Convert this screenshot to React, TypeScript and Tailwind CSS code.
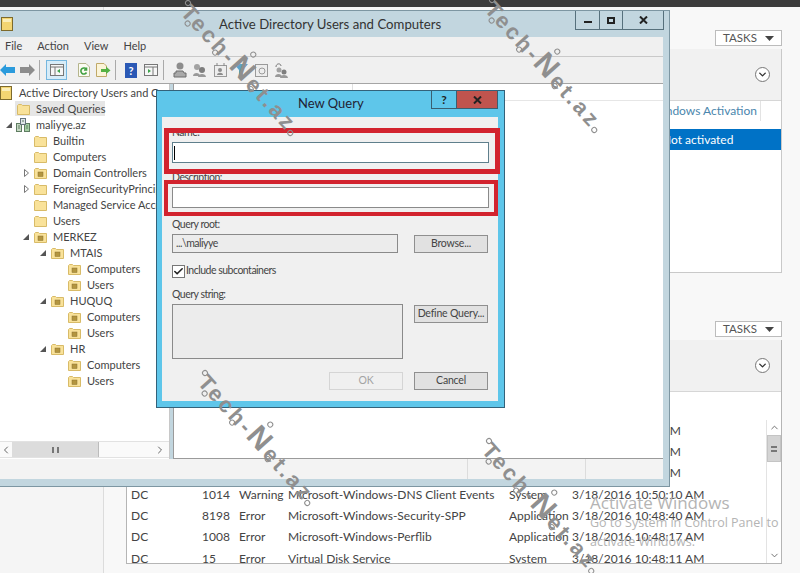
import React from "react";
import { Check, ChevronDown, ChevronLeft, ChevronRight, ChevronUp } from "lucide-react";

const tree = [
  { level: 0, label: "Active Directory Users and Computers", icon: "root" },
  { level: 1, label: "Saved Queries", icon: "folder", selected: true },
  { level: 1, label: "maliyye.az", icon: "domain", arrow: "open" },
  { level: 2, label: "Builtin", icon: "folder" },
  { level: 2, label: "Computers", icon: "folder" },
  { level: 2, label: "Domain Controllers", icon: "ou", arrow: "closed" },
  { level: 2, label: "ForeignSecurityPrincipals", icon: "folder", arrow: "closed" },
  { level: 2, label: "Managed Service Accounts", icon: "folder" },
  { level: 2, label: "Users", icon: "folder" },
  { level: 2, label: "MERKEZ", icon: "ou", arrow: "open" },
  { level: 3, label: "MTAIS", icon: "ou", arrow: "open" },
  { level: 4, label: "Computers", icon: "ou" },
  { level: 4, label: "Users", icon: "ou" },
  { level: 3, label: "HUQUQ", icon: "ou", arrow: "open" },
  { level: 4, label: "Computers", icon: "ou" },
  { level: 4, label: "Users", icon: "ou" },
  { level: 3, label: "HR", icon: "ou", arrow: "open" },
  { level: 4, label: "Computers", icon: "ou" },
  { level: 4, label: "Users", icon: "ou" },
];

const events = [
  ["", "", "", "", "", "AM"],
  ["", "", "", "", "", "AM"],
  ["", "", "", "", "", "AM"],
  ["DC", "1014", "Warning", "Microsoft-Windows-DNS Client Events", "System", "3/18/2016 10:50:10 AM"],
  ["DC", "8198", "Error", "Microsoft-Windows-Security-SPP", "Application", "3/18/2016 10:48:40 AM"],
  ["DC", "1008", "Error", "Microsoft-Windows-Perflib", "Application", "3/18/2016 10:48:17 AM"],
  ["DC", "15", "Error", "Virtual Disk Service", "System", "3/18/2016 10:48:11 AM"],
];

const TreeIcon = ({ kind }: { kind: string }) => {
  if (kind === "root")
    return (
      <svg width="12" height="14" viewBox="0 0 12 14">
        <rect x="0.5" y="0.5" width="11" height="13" fill="#f3d572" stroke="#7d6a2c" />
        <rect x="2" y="2" width="8" height="3" fill="#fbeeb8" />
      </svg>
    );
  if (kind === "domain")
    return (
      <svg width="14" height="14" viewBox="0 0 14 14">
        <rect x="0.5" y="5.5" width="5" height="8" fill="#c7d8c4" stroke="#5f7d62" />
        <rect x="8.5" y="5.5" width="5" height="8" fill="#a5cfa4" stroke="#5f7d62" />
        <rect x="4.5" y="0.5" width="5" height="6" fill="#dfe5e8" stroke="#66747c" />
        <path d="M2 8h2M2 10h2M10 8h2M10 10h2M6 3h2" stroke="#5f7d62" />
      </svg>
    );
  return (
    <svg width="13" height="13" viewBox="0 0 13 13">
      <path d="M0.5 2.5L1.5 1.5H4.5L5.5 2.5H12.5V11.5H0.5Z" fill="#f9e29a" stroke="#d8bb68" />
      {kind === "ou" && <rect x="4" y="5" width="5" height="4.5" fill="#b3953f" stroke="#8a7230" strokeWidth="0.5" />}
    </svg>
  );
};

const TreeRow = ({ row }: { row: (typeof tree)[number] }) => (
  <div className="relative flex h-4 items-center whitespace-nowrap" style={{ paddingLeft: row.level * 17 }}>
    {row.selected && <i className="absolute left-[16px] top-0 h-[15px] w-[90px] bg-[#e6e6e6]" />}
    {row.arrow === "open" && (
      <svg className="absolute top-[5px]" style={{ left: row.level * 17 - 10 }} width="6" height="6" viewBox="0 0 6 6">
        <path d="M6 0V6H0Z" fill="#555" />
      </svg>
    )}
    {row.arrow === "closed" && (
      <svg className="absolute top-[4px]" style={{ left: row.level * 17 - 9 }} width="5" height="8" viewBox="0 0 5 8">
        <path d="M0.5 0.5L4.5 4L0.5 7.5Z" fill="#fff" stroke="#777" />
      </svg>
    )}
    <span className="relative flex w-[14px] shrink-0 justify-center">
      <TreeIcon kind={row.icon} />
    </span>
    <span className="relative ml-[6px]">{row.label}</span>
  </div>
);

const Ring = ({ className }: { className: string }) => (
  <i className={`absolute h-[6px] w-[6px] rounded-full border-[1.5px] border-[#8f8f8f] ${className}`} />
);

const Watermark = ({ className }: { className: string }) => (
  <div className={`pointer-events-none absolute z-30 h-0 w-0 origin-top-left rotate-[48deg] ${className}`}>
    <span className="absolute -top-[12px] left-[2px] whitespace-nowrap font-['Liberation_Sans',sans-serif] text-[22px] font-bold leading-none tracking-[3px] text-[#8f8f8f]">
      Tech-<span className="text-[30px]">N</span>et.az
    </span>
    <Ring className="-left-[3px] -top-[3px]" />
    <Ring className="left-[12px] top-[11px]" />
    <Ring className="left-[52px] top-[10px]" />
    <Ring className="left-[79px] -top-[17px]" />
    <Ring className="left-[103px] top-[8px]" />
    <Ring className="left-[162px] top-[8px]" />
  </div>
);

const Tasks = () => (
  <div className="flex h-[16px] w-[67px] items-center justify-between border border-[#bcbcbc] bg-white pl-[7px] pr-[7px] text-[11.5px] text-[#555]">
    TASKS
    <svg width="9" height="5" viewBox="0 0 9 5"><path d="M0 0H9L4.5 5Z" fill="#444" /></svg>
  </div>
);

const PanelHead = () => (
  <div className="flex h-[52px] items-center justify-end border-b border-[#d6d6d6] bg-[#f1f1f1] pr-[11px]">
    <span className="flex h-[15px] w-[15px] items-center justify-center rounded-full border border-[#777] bg-white">
      <ChevronDown size={11} strokeWidth={3} color="#333" />
    </span>
  </div>
);

const CaptionX = () => (
  <svg width="9" height="8" viewBox="0 0 9 8">
    <path d="M1 0.5L8 7.5M8 0.5L1 7.5" stroke="#222" strokeWidth="2" />
  </svg>
);

const Btn = ({ label, disabled, className }: { label: string; disabled?: boolean; className?: string }) => (
  <div
    className={`flex h-[18px] w-[74px] items-center justify-center whitespace-nowrap border text-[10.5px] tracking-[-0.2px] ${
      disabled ? "border-[#d5d5d5] bg-[#f0f0f0] text-[#a3a3a3]" : "border-[#8f8f8f] bg-[#e1e1e1] text-[#444]"
    } ${className ?? ""}`}
  >
    {label}
  </div>
);

const Toolbar = () => (
  <div className="flex h-[27px] shrink-0 items-center border-b border-[#a5a5a5] bg-[#f0f0f0] pl-[1px]">
    <svg width="15" height="12" viewBox="0 0 15 12"><path d="M0 6L6 0V3H15V9H6V12Z" fill="#2b9bdc" /></svg>
    <svg className="ml-[5px]" width="15" height="12" viewBox="0 0 15 12"><path d="M15 6L9 0V3H0V9H9V12Z" fill="#8d8d8d" /></svg>
    <i className="ml-[4px] h-[20px] w-px bg-[#a9a9a9]" />
    <span className="ml-[6px] flex h-[20px] w-[21px] items-center justify-center border border-[#76b7df] bg-[#d7ecf8]">
      <svg width="14" height="12" viewBox="0 0 14 12">
        <rect x="0.5" y="0.5" width="13" height="11" fill="#f6f6f6" stroke="#777" />
        <path d="M0 3H14M5 3V12" stroke="#777" />
        <path d="M10 5V9L7 7Z" fill="#3ca34a" />
      </svg>
    </span>
    <svg className="ml-[11px]" width="12" height="14" viewBox="0 0 12 14">
      <path d="M0.5 0.5H8L11.5 4V13.5H0.5Z" fill="#fbfbf2" stroke="#b5b58c" />
      <path d="M8.5 6.5A3 3 0 1 0 8.5 9.5M8.5 4.5V7H6" fill="none" stroke="#3fa03f" strokeWidth="1.6" />
    </svg>
    <svg className="ml-[6px]" width="15" height="14" viewBox="0 0 15 14">
      <path d="M0.5 0.5H8L10.5 3V13.5H0.5Z" fill="#fbf4d8" stroke="#c0a968" />
      <path d="M5 6H10V3.5L14.5 7.5L10 11V9H5Z" fill="#55b144" />
    </svg>
    <i className="ml-[4px] h-[20px] w-px bg-[#a9a9a9]" />
    <span className="ml-[9px] flex h-[15px] w-[12px] items-center justify-center bg-[#2b59b5] text-[11px] font-bold leading-none text-white">?</span>
    <svg className="ml-[7px]" width="14" height="12" viewBox="0 0 14 12">
      <rect x="0.5" y="0.5" width="13" height="11" fill="#f6f6f6" stroke="#777" />
      <path d="M0 3H14M9 3V12" stroke="#777" />
      <path d="M4 5V9L7 7Z" fill="#3ca34a" />
    </svg>
    <i className="ml-[5px] h-[20px] w-px bg-[#a9a9a9]" />
    <div className="ml-[8px] flex items-center text-[#777]">
      <svg width="15" height="16" viewBox="0 0 15 16">
        <circle cx="8" cy="4" r="3.5" fill="#8d8d8d" />
        <path d="M4 9H11L12 11H14V15H2V11H4Z" fill="#a9a9a9" stroke="#6d6d6d" />
      </svg>
      <svg className="ml-[5px]" width="15" height="14" viewBox="0 0 15 14">
        <circle cx="5" cy="4" r="3" fill="#a2a2a2" />
        <circle cx="10" cy="7" r="3" fill="#7e7e7e" />
        <path d="M1 13C1 9 8 9 8 13ZM6 14C6 10 14 10 14 14Z" fill="#999" />
      </svg>
      <svg className="ml-[7px]" width="13" height="14" viewBox="0 0 13 14">
        <rect x="0.5" y="2.5" width="12" height="11" fill="#ededed" stroke="#9a9a9a" />
        <circle cx="6" cy="7" r="2" fill="#8d8d8d" />
        <path d="M3 12C3 9 9 9 9 12Z" fill="#8d8d8d" />
        <path d="M3 0V3M10 0V3" stroke="#888" />
      </svg>
      <svg className="ml-[7px]" width="14" height="13" viewBox="0 0 14 13">
        <path d="M0 0H14L9 6V13L5 11V6Z" fill="#5da3c9" />
      </svg>
      <svg className="ml-[7px]" width="13" height="13" viewBox="0 0 13 13">
        <rect x="0.5" y="0.5" width="12" height="12" fill="#ededed" stroke="#9a9a9a" />
        <circle cx="7" cy="7" r="3" fill="none" stroke="#999" />
      </svg>
      <svg className="ml-[6px]" width="14" height="16" viewBox="0 0 14 16">
        <path d="M2 5C2 1 7 1 7 4" fill="none" stroke="#777" />
        <circle cx="5" cy="8" r="2.5" fill="#a2a2a2" />
        <circle cx="10" cy="10" r="2.5" fill="#7e7e7e" />
        <path d="M1 15C1 11 8 11 8 15ZM6 16C6 12 14 12 14 16Z" fill="#999" />
      </svg>
    </div>
  </div>
);

export default function App() {
  return (
    <div className="relative h-[573px] w-[800px] overflow-hidden bg-[#f8f8f8] font-['Lato','Open_Sans',sans-serif] text-[12px] text-[#444]">
      {/* server manager behind the windows */}
      <div className="h-[7px] bg-[#3c3c3c]" />
      <div className="flex h-[566px]">
        <div className="w-[104px] border-r border-[#dcdcdc] bg-[#f5f5f5]" />
        <div className="ml-[22px] flex w-[656px] flex-col">
          <div className="mt-[23px] flex justify-end"><Tasks /></div>
          <div className="mt-[3px] h-[224px] border-b border-r border-[#c9c9c9] bg-white">
            <PanelHead />
            <div className="relative flex h-[28px] items-start justify-end pr-[24px] pt-[1px] text-[#4a86ad]">
              Windows Activation
              <i className="absolute right-[20px] top-0 h-[20px] w-px bg-[#e3e3e3]" />
            </div>
            <div className="flex h-[21px] items-center bg-[#0072c6] pl-[536px] text-white">Not activated</div>
          </div>
          <div className="mt-[48px] flex justify-end"><Tasks /></div>
          <div className="mt-[3px] flex h-[224px] flex-col border-b border-l border-r border-[#b5b5b5] bg-white">
            <PanelHead />
            <div className="flex h-[171px] pt-[28px]">
              <div className="min-w-0 flex-1 overflow-hidden pl-[4px]">
                {events.map((e, i) => (
                  <div key={i} className="grid h-[21.33px] grid-cols-[71px_37px_49px_221px_63px_109px] items-center whitespace-nowrap">
                    <span>{e[0]}</span>
                    <span>{e[1]}</span>
                    <span>{e[2]}</span>
                    <span>{e[3]}</span>
                    <span>{e[4]}</span>
                    <span className="text-right">{e[5]}</span>
                  </div>
                ))}
              </div>
              <div className="flex w-[15px] shrink-0 flex-col items-center border-l border-[#e3e3e3] bg-white text-[#666]">
                <ChevronUp className="my-[2px]" size={11} />
                <div className="flex h-[27px] w-[14px] items-center justify-center border border-[#c4c4c4] bg-[#d4d4d4]">
                  <div className="h-[6px] w-[6px] border-y-2 border-[#777]" />
                </div>
                <ChevronDown className="mt-auto mb-[2px]" size={11} />
              </div>
            </div>
          </div>
        </div>
      </div>

      {/* Active Directory window */}
      <div className="absolute -left-[8px] top-[10px] z-10 flex h-[477px] w-[678px] flex-col border border-[#7d96a2] bg-[#c2d6df] px-[6px] pb-[7px]">
        <div className="relative flex h-[26px] shrink-0 items-center pl-[4px]">
          <div className="ml-[-2px] flex h-[14px] w-[12px] items-center justify-center">
            <TreeIcon kind="root" />
          </div>
          <span className="absolute left-[220px] top-[4px] text-[13.2px] leading-[18px] text-[#333]">Active Directory Users and Computers</span>
          <div className="absolute -right-[1px] top-0 flex h-[19px] border-x border-b border-[#56707c] text-[#222]">
            <span className="flex w-[24px] items-center justify-center border-r border-[#56707c]"><i className="mt-[3px] h-[2px] w-[8px] bg-[#222]" /></span>
            <span className="flex w-[23px] items-center justify-center border-r border-[#56707c]"><i className="h-[7px] w-[8px] border-2 border-[#222]" /></span>
            <span className="flex w-[40px] items-center justify-center"><CaptionX /></span>
          </div>
        </div>
        <div className="flex h-[20px] shrink-0 items-center gap-[15px] border-b border-[#c9c9c9] bg-[#f0f0f0] pl-[6px] text-[11px]">
          <span>File</span><span>Action</span><span>View</span><span>Help</span>
        </div>
        <Toolbar />
        <div className="flex min-h-0 flex-1">
          <div className="relative w-[171px] shrink-0 overflow-hidden border-r border-[#c8c8c8] bg-white pt-[1px] text-[11px]">
            {tree.map((r, i) => <TreeRow key={i} row={r} />)}
            <div className="absolute bottom-[1px] left-0 right-0 flex h-[17px] items-center border-y border-[#e2e2e2] bg-[#fafafa] text-[#666]">
              <ChevronLeft className="ml-[1px]" size={12} />
              <div className="flex h-[15px] w-[87px] items-center justify-center border-r border-[#bcbcbc] bg-[#dcdcdc]">
                <div className="h-[6px] w-[7px] border-x-2 border-[#777]" />
              </div>
              <ChevronRight className="ml-auto mr-[3px]" size={12} />
            </div>
          </div>
          <div className="ml-[3px] flex-1 border-b border-l border-[#9b9b9b] bg-white">
            <div className="relative h-[17px] border-b border-[#e6e6e6]">
              <i className="absolute left-[178px] top-0 h-[16px] w-px bg-[#e0e0e0]" />
            </div>
          </div>
        </div>
        <div className="flex h-[20px] shrink-0 bg-[#f3f3f3]">
          <div className="w-[469px] border-r border-[#dcdcdc]" />
          <div className="w-[118px] border-r border-[#dcdcdc]" />
        </div>
      </div>

      {/* New Query dialog */}
      <div className="absolute left-[156px] top-[90px] z-20 flex h-[318px] w-[349px] flex-col border border-[#33627a] bg-[#5ec6ea] pb-[6px] pl-[5px] pr-[6px]">
        <div className="relative h-[26px] shrink-0">
          <span className="absolute left-[136px] top-[3px] text-[13px] leading-[18px] text-[#223]">New Query</span>
          <div className="absolute right-0 top-0 flex h-[18px] border-x border-b border-[#3a5f70]">
            <span className="flex w-[25px] items-center justify-center border-r border-[#3a5f70] text-[12px] font-bold text-[#222]">?</span>
            <span className="flex w-[40px] items-center justify-center bg-[#c0544e]"><CaptionX /></span>
          </div>
        </div>
        <div className="relative flex-1 bg-[#f0f0f0] pl-[10px] pr-[10px] pt-[8px] text-[10.5px] tracking-[-0.5px] text-[#444]">
          <div className="h-[14px] leading-[14px]">Name:</div>
          <div className="-mr-[1px] mt-[3px] flex h-[21px] items-center border border-[#5f7f8c] bg-white pl-[1px]"><i className="h-[14px] w-px bg-black" /></div>
          <div className="mt-[7px] h-[14px] leading-[14px]">Description:</div>
          <div className="-mr-[1px] mt-[3px] h-[21px] border border-[#8a8a8a] bg-white" />
          <div className="mt-[9px] h-[14px] leading-[14px]">Query root:</div>
          <div className="mt-[3px] flex items-start justify-between">
            <div className="flex h-[19px] w-[226px] items-center border border-[#8a8a8a] bg-[#ececec] pl-[3px]">...\maliyye</div>
            <Btn label="Browse..." className="mt-[1px]" />
          </div>
          <div className="mt-[11px] flex h-[14px] items-center gap-[1px]">
            <span className="flex h-[13px] w-[13px] items-center justify-center border border-[#777] bg-white">
              <Check size={11} strokeWidth={3.5} color="#222" />
            </span>
            <span>Include subcontainers</span>
          </div>
          <div className="mt-[9px] h-[14px] leading-[14px]">Query string:</div>
          <div className="mt-[3px] flex items-start justify-between">
            <div className="h-[55px] w-[231px] border border-[#8a8a8a] bg-[#ececec]" />
            <Btn label="Define Query..." className="mt-[1px]" />
          </div>
          <div className="mt-[13px] flex justify-end gap-[11px]">
            <Btn label="OK" disabled />
            <Btn label="Cancel" />
          </div>
          {/* red highlight boxes drawn over the screenshot */}
          <div className="absolute left-[2px] top-[11px] h-[46px] w-[336px] border-[5px] border-[#d2232e]" />
          <div className="absolute left-[2px] top-[63px] h-[36px] w-[334px] border-[4px] border-[#d2232e]" />
        </div>
      </div>

      {/* Activate Windows overlay */}
      <div className="pointer-events-none absolute left-[590px] top-[493px] z-[5] font-['Open_Sans',sans-serif] text-[#b4b4b4]">
        <div className="text-[17px] leading-[20px]">Activate Windows</div>
        <div className="whitespace-nowrap text-[12.5px] leading-[19px]">Go to System in Control Panel to</div>
        <div className="whitespace-nowrap text-[12.5px] leading-[19px]">activate Windows.</div>
      </div>

      <Watermark className="left-[188px] top-[3px]" />
      <Watermark className="left-[492px] top-[0px]" />
      <Watermark className="left-[205px] top-[373px]" />
      <Watermark className="left-[489px] top-[441px]" />
    </div>
  );
}
